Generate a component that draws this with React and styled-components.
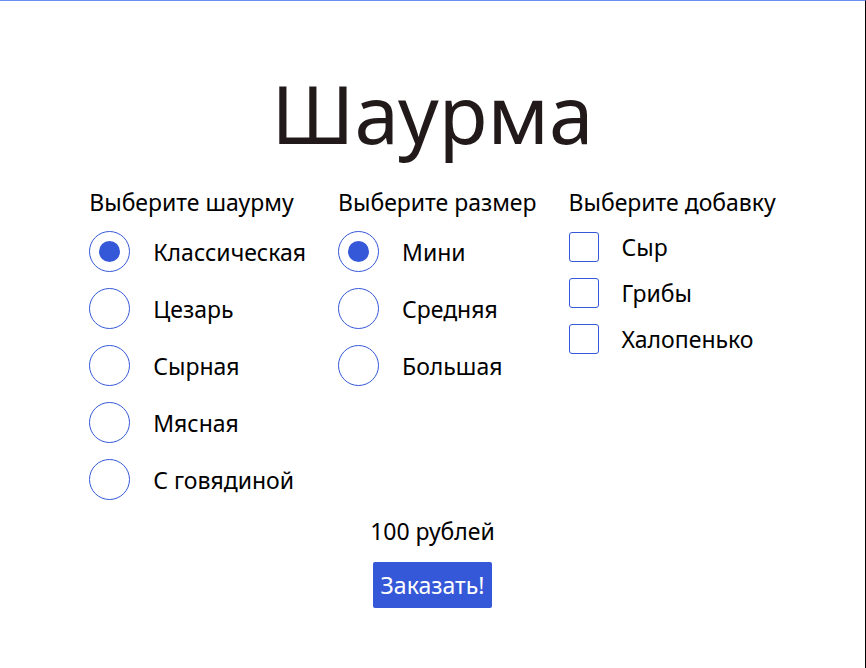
import React, { useState } from "react";
import styled, { createGlobalStyle } from "styled-components";

const GlobalStyle = createGlobalStyle`
  html, body {
    margin: 0;
    padding: 0;
    background: #fff;
  }
  * {
    box-sizing: border-box;
  }
`;

const BLUE = "#3558d8";

const Page = styled.div`
  min-height: 100vh;
  border-top: 1px solid #6a8ff0;
  border-right: 1px solid #000;
  font-family: "Noto Sans", "Open Sans", sans-serif;
  color: #000;
  display: flex;
  flex-direction: column;
  align-items: center;
`;

const Title = styled.h1`
  margin: 62px 0 0;
  font-size: 80px;
  line-height: 100px;
  font-weight: 400;
  color: #221a1a;
`;

const Columns = styled.div`
  display: flex;
  justify-content: center;
  gap: 32px;
  margin-top: 24px;
`;

const Column = styled.div`
  display: flex;
  flex-direction: column;
`;

const Heading = styled.div`
  font-size: 23px;
  line-height: 30px;
  margin-bottom: ${p => (p.tight ? 15 : 14)}px;
`;

const List = styled.div`
  display: flex;
  flex-direction: column;
  gap: 16px;
`;

const Option = styled.label`
  display: flex;
  align-items: center;
  gap: 23px;
  font-size: 23px;
  line-height: 30px;
  cursor: pointer;
`;

const Radio = styled.input.attrs({ type: "radio" })`
  appearance: none;
  margin: 0;
  width: 41px;
  height: 41px;
  border: 1.5px solid ${BLUE};
  border-radius: 50%;
  display: grid;
  place-items: center;
  cursor: pointer;

  &::before {
    content: "";
    width: 21px;
    height: 21px;
    border-radius: 50%;
    background: ${BLUE};
    transform: scale(${p => (p.checked ? 1 : 0)});
  }
`;

const Checkbox = styled.input.attrs({ type: "checkbox" })`
  appearance: none;
  margin: 0;
  width: 30px;
  height: 30px;
  border: 1.5px solid ${BLUE};
  border-radius: 3px;
  cursor: pointer;
  background: ${p => (p.checked ? BLUE : "#fff")};
`;

const Price = styled.div`
  margin-top: 16px;
  font-size: 23px;
  line-height: 30px;
`;

const OrderButton = styled.button`
  margin-top: 16px;
  width: 119px;
  height: 46px;
  padding: 0;
  border: none;
  border-radius: 2px;
  background: ${BLUE};
  color: #fff;
  font-family: inherit;
  font-size: 23px;
  cursor: pointer;
`;

const shawarmas = ["Классическая", "Цезарь", "Сырная", "Мясная", "С говядиной"];
const sizes = ["Мини", "Средняя", "Большая"];
const extras = ["Сыр", "Грибы", "Халопенько"];

export default function App() {
  const [kind, setKind] = useState(shawarmas[0]);
  const [size, setSize] = useState(sizes[0]);
  const [added, setAdded] = useState([]);

  const toggle = name =>
    setAdded(list => (list.includes(name) ? list.filter(n => n !== name) : [...list, name]));

  return (
    <>
      <GlobalStyle />
      <Page>
        <Title>Шаурма</Title>
        <Columns>
          <Column>
            <Heading>Выберите шаурму</Heading>
            <List>
              {shawarmas.map(name => (
                <Option key={name}>
                  <Radio name="kind" checked={kind === name} onChange={() => setKind(name)} />
                  {name}
                </Option>
              ))}
            </List>
          </Column>
          <Column>
            <Heading>Выберите размер</Heading>
            <List>
              {sizes.map(name => (
                <Option key={name}>
                  <Radio name="size" checked={size === name} onChange={() => setSize(name)} />
                  {name}
                </Option>
              ))}
            </List>
          </Column>
          <Column>
            <Heading tight>Выберите добавку</Heading>
            <List>
              {extras.map(name => (
                <Option key={name}>
                  <Checkbox checked={added.includes(name)} onChange={() => toggle(name)} />
                  {name}
                </Option>
              ))}
            </List>
          </Column>
        </Columns>
        <Price>100 рублей</Price>
        <OrderButton>Заказать!</OrderButton>
      </Page>
    </>
  );
}
